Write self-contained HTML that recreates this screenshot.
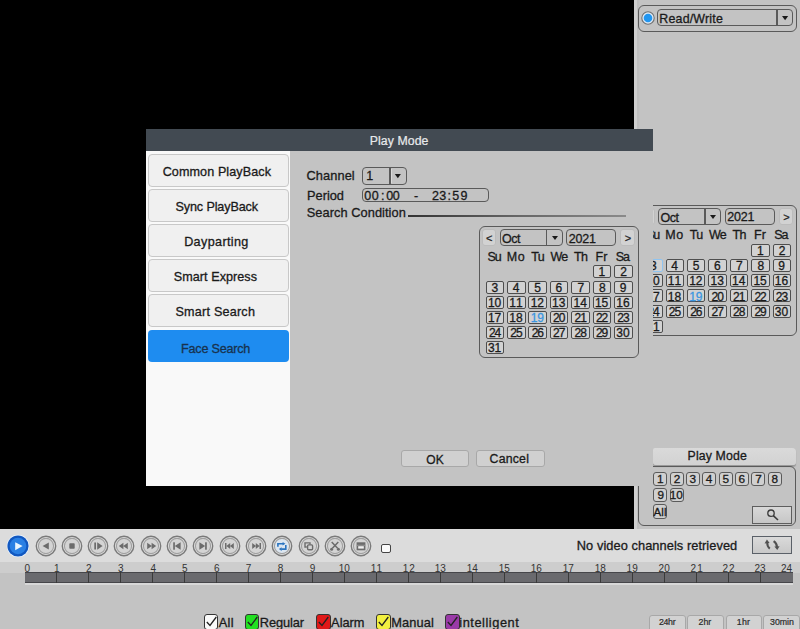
<!DOCTYPE html><html><head><meta charset="utf-8"><style>
*{box-sizing:border-box;margin:0;padding:0}
body{width:800px;height:629px;position:relative;overflow:hidden;background:#c3c3c3;font-family:'Liberation Sans',sans-serif;color:#1a1a1a}
.a{position:absolute}
.t{position:absolute;white-space:pre}
.cal{position:absolute;width:159px;height:131.5px}
.cal div{position:absolute}
.cal .cbd{left:-0.5px;top:-0.5px;width:159.5px;height:131.8px;border:1.5px solid #5a5a5a;border-radius:6px}
.cal .cbtn{top:2.5px;width:14.8px;height:17px;background:#d2d2d2;border:1px solid #bcbcbc;border-radius:3px}
.cal .mon{left:20.3px;top:2.6px;width:63.2px;height:17.2px;border:1.5px solid #5a5a5a;border-radius:4px}
.cal .yr{left:86.6px;top:2.8px;width:50px;height:17px;border:1.5px solid #5a5a5a;border-radius:4px}
.cal .sep{left:66.3px;top:2.6px;width:1.5px;height:17.2px;background:#5a5a5a}
.cal .arr{left:72.3px;top:9.6px;width:0;height:0;border-left:3.2px solid transparent;border-right:3.2px solid transparent;border-top:4.4px solid #1a1a1a}
.cal .cell{width:18.6px;height:13px;border:1.5px solid #4e4e4e;border-radius:2px;background:#d2d2d2}
</style></head><body>
<div class="a" style="left:0;top:0;width:634px;height:529px;background:#000"></div>
<div class="a" style="left:634px;top:0;width:2.5px;height:529px;background:#cfcfcf"></div>
<div class="a" style="left:636.5px;top:0;width:2px;height:529px;background:#bfbfbf"></div>
<div class="a" style="left:638px;top:4.5px;width:158.5px;height:27px;border:1.5px solid #5a5a5a;border-radius:6px"></div>
<svg class="a" style="left:640px;top:9.5px" width="16" height="16"><circle cx="8" cy="8" r="6.2" fill="#dde9f5" stroke="#707070" stroke-width="1.1"/><circle cx="8" cy="8" r="4.3" fill="#2196f0"/></svg>
<div class="a" style="left:657px;top:9.3px;width:136px;height:17.2px;border:1.5px solid #5a5a5a;border-radius:4px"></div>
<div class="a" style="left:776px;top:9.3px;width:1.5px;height:17.2px;background:#5a5a5a"></div>
<svg class="a" style="left:778px;top:12px" width="16" height="12"><path d="M4 4 L10.2 4 L7.1 8.2 Z" fill="#1a1a1a"/></svg>
<div class="cal" style="left:638px;top:205px"><div class="cbd"></div><div class="cbtn" style="left:2px"></div><div class="mon"></div><div class="sep"></div><div class="arr"></div><div class="yr"></div><div class="cbtn" style="left:140.6px"></div><div class="cell" style="left:113.1px;top:38.8px;"></div><div class="cell" style="left:134.5px;top:38.8px;"></div><div class="cell" style="left:6.1px;top:54.0px;border-color:#90c4f0;"></div><div class="cell" style="left:27.5px;top:54.0px;"></div><div class="cell" style="left:48.9px;top:54.0px;"></div><div class="cell" style="left:70.3px;top:54.0px;"></div><div class="cell" style="left:91.7px;top:54.0px;"></div><div class="cell" style="left:113.1px;top:54.0px;"></div><div class="cell" style="left:134.5px;top:54.0px;"></div><div class="cell" style="left:6.1px;top:69.2px;"></div><div class="cell" style="left:27.5px;top:69.2px;"></div><div class="cell" style="left:48.9px;top:69.2px;"></div><div class="cell" style="left:70.3px;top:69.2px;"></div><div class="cell" style="left:91.7px;top:69.2px;"></div><div class="cell" style="left:113.1px;top:69.2px;"></div><div class="cell" style="left:134.5px;top:69.2px;"></div><div class="cell" style="left:6.1px;top:84.4px;"></div><div class="cell" style="left:27.5px;top:84.4px;"></div><div class="cell" style="left:48.9px;top:84.4px;"></div><div class="cell" style="left:70.3px;top:84.4px;"></div><div class="cell" style="left:91.7px;top:84.4px;"></div><div class="cell" style="left:113.1px;top:84.4px;"></div><div class="cell" style="left:134.5px;top:84.4px;"></div><div class="cell" style="left:6.1px;top:99.6px;"></div><div class="cell" style="left:27.5px;top:99.6px;"></div><div class="cell" style="left:48.9px;top:99.6px;"></div><div class="cell" style="left:70.3px;top:99.6px;"></div><div class="cell" style="left:91.7px;top:99.6px;"></div><div class="cell" style="left:113.1px;top:99.6px;"></div><div class="cell" style="left:134.5px;top:99.6px;"></div><div class="cell" style="left:6.1px;top:114.8px;"></div></div>
<div class="a" style="left:653.3px;top:447.6px;width:142.7px;height:17px;background:linear-gradient(#dadada,#d2d2d2);box-shadow:0 1.2px 1px #9a9a9a;border-radius:2px 4px 3px 3px"></div>
<div class="a" style="left:638px;top:466px;width:158.4px;height:59.5px;border:1.5px solid #5a5a5a;border-radius:6px"></div>
<div class="a" style="left:653.4px;top:471.5px;width:14px;height:14px;border:1.5px solid #5a5a5a;border-radius:3px;background:#d0d0d0"></div>
<div class="a" style="left:669.7px;top:471.5px;width:14px;height:14px;border:1.5px solid #5a5a5a;border-radius:3px;background:#d0d0d0"></div>
<div class="a" style="left:686.0px;top:471.5px;width:14px;height:14px;border:1.5px solid #5a5a5a;border-radius:3px;background:#d0d0d0"></div>
<div class="a" style="left:702.3px;top:471.5px;width:14px;height:14px;border:1.5px solid #5a5a5a;border-radius:3px;background:#d0d0d0"></div>
<div class="a" style="left:718.6px;top:471.5px;width:14px;height:14px;border:1.5px solid #5a5a5a;border-radius:3px;background:#d0d0d0"></div>
<div class="a" style="left:734.9px;top:471.5px;width:14px;height:14px;border:1.5px solid #5a5a5a;border-radius:3px;background:#d0d0d0"></div>
<div class="a" style="left:751.2px;top:471.5px;width:14px;height:14px;border:1.5px solid #5a5a5a;border-radius:3px;background:#d0d0d0"></div>
<div class="a" style="left:767.5px;top:471.5px;width:14px;height:14px;border:1.5px solid #5a5a5a;border-radius:3px;background:#d0d0d0"></div>
<div class="a" style="left:653.4px;top:487.8px;width:14px;height:14px;border:1.5px solid #5a5a5a;border-radius:3px;background:#d0d0d0"></div>
<div class="a" style="left:669.7px;top:487.8px;width:14px;height:14px;border:1.5px solid #5a5a5a;border-radius:3px;background:#d0d0d0"></div>
<div class="a" style="left:653.4px;top:503.8px;width:14px;height:15.5px;border:1.5px solid #5a5a5a;border-radius:3px;background:#d0d0d0"></div>
<div class="a" style="left:752.3px;top:506px;width:39.5px;height:17.6px;border:1.3px solid #5e5e5e;background:linear-gradient(#d8d8d8,#c6c6c6)"></div>
<svg class="a" style="left:764px;top:507px" width="18" height="16"><circle cx="7" cy="6.2" r="3.2" fill="none" stroke="#3a3a3a" stroke-width="1.3"/><line x1="9.3" y1="8.6" x2="14" y2="13" stroke="#3a3a3a" stroke-width="1.6"/></svg>
<div class="t" style="left:659.35px;top:12.5px;font-size:12.4px;line-height:12.4px;color:#1a1a1a;letter-spacing:0.189px;-webkit-text-stroke:0.3px #1a1a1a;">Read/Write</div>
<div class="t" style="left:687.55px;top:450.4px;font-size:12.3px;line-height:12.3px;color:#1a1a1a;letter-spacing:0.138px;-webkit-text-stroke:0.3px #1a1a1a;">Play Mode</div>
<div class="t" style="left:656.9px;top:474.0px;font-size:11.8px;line-height:11.8px;color:#1a1a1a;-webkit-text-stroke:0.3px #1a1a1a;">1</div>
<div class="t" style="left:673.7px;top:474.0px;font-size:11.8px;line-height:11.8px;color:#1a1a1a;-webkit-text-stroke:0.3px #1a1a1a;">2</div>
<div class="t" style="left:689.5px;top:474.0px;font-size:11.8px;line-height:11.8px;color:#1a1a1a;-webkit-text-stroke:0.3px #1a1a1a;">3</div>
<div class="t" style="left:705.8px;top:474.0px;font-size:11.8px;line-height:11.8px;color:#1a1a1a;-webkit-text-stroke:0.3px #1a1a1a;">4</div>
<div class="t" style="left:722.6px;top:474.0px;font-size:11.8px;line-height:11.8px;color:#1a1a1a;-webkit-text-stroke:0.3px #1a1a1a;">5</div>
<div class="t" style="left:738.4px;top:474.0px;font-size:11.8px;line-height:11.8px;color:#1a1a1a;-webkit-text-stroke:0.3px #1a1a1a;">6</div>
<div class="t" style="left:755.2px;top:474.0px;font-size:11.8px;line-height:11.8px;color:#1a1a1a;-webkit-text-stroke:0.3px #1a1a1a;">7</div>
<div class="t" style="left:771.5px;top:474.0px;font-size:11.8px;line-height:11.8px;color:#1a1a1a;-webkit-text-stroke:0.3px #1a1a1a;">8</div>
<div class="t" style="left:657.4px;top:490.0px;font-size:11.8px;line-height:11.8px;color:#1a1a1a;-webkit-text-stroke:0.3px #1a1a1a;">9</div>
<div class="t" style="left:669.7px;top:490.0px;font-size:11.8px;line-height:11.8px;color:#1a1a1a;-webkit-text-stroke:0.3px #1a1a1a;">10</div>
<div class="t" style="left:653.6px;top:507.0px;font-size:11.5px;line-height:11.5px;color:#1a1a1a;letter-spacing:0.1px;-webkit-text-stroke:0.3px #1a1a1a;">All</div>
<div class="t" style="left:660.5px;top:211.5px;font-size:12.5px;line-height:12.5px;color:#1a1a1a;letter-spacing:-0.5px;-webkit-text-stroke:0.3px #1a1a1a;">Oct</div>
<div class="t" style="left:727.25px;top:211.3px;font-size:12.5px;line-height:12.5px;color:#1a1a1a;letter-spacing:-0.167px;-webkit-text-stroke:0.3px #1a1a1a;">2021</div>
<div class="t" style="left:644.5px;top:211.9px;font-size:11px;line-height:11px;color:#222;-webkit-text-stroke:0.25px #222;">&lt;</div>
<div class="t" style="left:783.3px;top:211.9px;font-size:11px;line-height:11px;color:#222;-webkit-text-stroke:0.25px #222;">&gt;</div>
<div class="t" style="left:645.9px;top:229.3px;font-size:12.5px;line-height:12.5px;color:#1a1a1a;letter-spacing:-1.0px;-webkit-text-stroke:0.3px #1a1a1a;">Su</div>
<div class="t" style="left:665.3px;top:229.3px;font-size:12.5px;line-height:12.5px;color:#1a1a1a;letter-spacing:0.5px;-webkit-text-stroke:0.3px #1a1a1a;">Mo</div>
<div class="t" style="left:689.7px;top:229.3px;font-size:12.5px;line-height:12.5px;color:#1a1a1a;letter-spacing:-0.5px;-webkit-text-stroke:0.3px #1a1a1a;">Tu</div>
<div class="t" style="left:709.1px;top:229.3px;font-size:12.5px;line-height:12.5px;color:#1a1a1a;letter-spacing:-1.0px;-webkit-text-stroke:0.3px #1a1a1a;">We</div>
<div class="t" style="left:732.5px;top:229.3px;font-size:12.5px;line-height:12.5px;color:#1a1a1a;letter-spacing:-0.6px;-webkit-text-stroke:0.3px #1a1a1a;">Th</div>
<div class="t" style="left:753.9px;top:229.3px;font-size:12.5px;line-height:12.5px;color:#1a1a1a;letter-spacing:0.3px;-webkit-text-stroke:0.3px #1a1a1a;">Fr</div>
<div class="t" style="left:774.3px;top:229.3px;font-size:12.5px;line-height:12.5px;color:#1a1a1a;letter-spacing:-1.2px;-webkit-text-stroke:0.3px #1a1a1a;">Sa</div>
<div class="t" style="left:756.9px;top:244.9px;font-size:12px;line-height:12px;color:#1a1a1a;-webkit-text-stroke:0.3px #1a1a1a;">1</div>
<div class="t" style="left:778.8px;top:244.9px;font-size:12px;line-height:12px;color:#1a1a1a;-webkit-text-stroke:0.3px #1a1a1a;">2</div>
<div class="t" style="left:649.9px;top:260.1px;font-size:12px;line-height:12px;color:#1a1a1a;-webkit-text-stroke:0.3px #1a1a1a;">3</div>
<div class="t" style="left:671.3px;top:260.1px;font-size:12px;line-height:12px;color:#1a1a1a;-webkit-text-stroke:0.3px #1a1a1a;">4</div>
<div class="t" style="left:692.7px;top:260.1px;font-size:12px;line-height:12px;color:#1a1a1a;-webkit-text-stroke:0.3px #1a1a1a;">5</div>
<div class="t" style="left:714.1px;top:260.1px;font-size:12px;line-height:12px;color:#1a1a1a;-webkit-text-stroke:0.3px #1a1a1a;">6</div>
<div class="t" style="left:736.0px;top:260.1px;font-size:12px;line-height:12px;color:#1a1a1a;-webkit-text-stroke:0.3px #1a1a1a;">7</div>
<div class="t" style="left:757.4px;top:260.1px;font-size:12px;line-height:12px;color:#1a1a1a;-webkit-text-stroke:0.3px #1a1a1a;">8</div>
<div class="t" style="left:778.3px;top:260.1px;font-size:12px;line-height:12px;color:#1a1a1a;-webkit-text-stroke:0.3px #1a1a1a;">9</div>
<div class="t" style="left:646.4px;top:275.3px;font-size:12px;line-height:12px;color:#1a1a1a;-webkit-text-stroke:0.3px #1a1a1a;">10</div>
<div class="t" style="left:667.8px;top:275.3px;font-size:12px;line-height:12px;color:#1a1a1a;letter-spacing:1.0px;-webkit-text-stroke:0.3px #1a1a1a;">11</div>
<div class="t" style="left:689.2px;top:275.3px;font-size:12px;line-height:12px;color:#1a1a1a;-webkit-text-stroke:0.3px #1a1a1a;">12</div>
<div class="t" style="left:710.6px;top:275.3px;font-size:12px;line-height:12px;color:#1a1a1a;-webkit-text-stroke:0.3px #1a1a1a;">13</div>
<div class="t" style="left:732.0px;top:275.3px;font-size:12px;line-height:12px;color:#1a1a1a;-webkit-text-stroke:0.3px #1a1a1a;">14</div>
<div class="t" style="left:753.4px;top:275.3px;font-size:12px;line-height:12px;color:#1a1a1a;-webkit-text-stroke:0.3px #1a1a1a;">15</div>
<div class="t" style="left:774.8px;top:275.3px;font-size:12px;line-height:12px;color:#1a1a1a;-webkit-text-stroke:0.3px #1a1a1a;">16</div>
<div class="t" style="left:646.4px;top:290.5px;font-size:12px;line-height:12px;color:#1a1a1a;-webkit-text-stroke:0.3px #1a1a1a;">17</div>
<div class="t" style="left:667.8px;top:290.5px;font-size:12px;line-height:12px;color:#1a1a1a;-webkit-text-stroke:0.3px #1a1a1a;">18</div>
<div class="t" style="left:689.2px;top:290.5px;font-size:12px;line-height:12px;color:#3a96e0;-webkit-text-stroke:0.3px #3a96e0;">19</div>
<div class="t" style="left:711.6px;top:290.5px;font-size:12px;line-height:12px;color:#1a1a1a;letter-spacing:-1.0px;-webkit-text-stroke:0.3px #1a1a1a;">20</div>
<div class="t" style="left:733.0px;top:290.5px;font-size:12px;line-height:12px;color:#1a1a1a;letter-spacing:-1.0px;-webkit-text-stroke:0.3px #1a1a1a;">21</div>
<div class="t" style="left:754.4px;top:290.5px;font-size:12px;line-height:12px;color:#1a1a1a;letter-spacing:-1.0px;-webkit-text-stroke:0.3px #1a1a1a;">22</div>
<div class="t" style="left:775.8px;top:290.5px;font-size:12px;line-height:12px;color:#1a1a1a;letter-spacing:-1.0px;-webkit-text-stroke:0.3px #1a1a1a;">23</div>
<div class="t" style="left:647.4px;top:305.7px;font-size:12px;line-height:12px;color:#1a1a1a;letter-spacing:-1.0px;-webkit-text-stroke:0.3px #1a1a1a;">24</div>
<div class="t" style="left:668.8px;top:305.7px;font-size:12px;line-height:12px;color:#1a1a1a;letter-spacing:-1.0px;-webkit-text-stroke:0.3px #1a1a1a;">25</div>
<div class="t" style="left:690.2px;top:305.7px;font-size:12px;line-height:12px;color:#1a1a1a;letter-spacing:-1.0px;-webkit-text-stroke:0.3px #1a1a1a;">26</div>
<div class="t" style="left:711.6px;top:305.7px;font-size:12px;line-height:12px;color:#1a1a1a;letter-spacing:-1.0px;-webkit-text-stroke:0.3px #1a1a1a;">27</div>
<div class="t" style="left:733.0px;top:305.7px;font-size:12px;line-height:12px;color:#1a1a1a;letter-spacing:-1.0px;-webkit-text-stroke:0.3px #1a1a1a;">28</div>
<div class="t" style="left:754.4px;top:305.7px;font-size:12px;line-height:12px;color:#1a1a1a;letter-spacing:-1.0px;-webkit-text-stroke:0.3px #1a1a1a;">29</div>
<div class="t" style="left:774.8px;top:305.7px;font-size:12px;line-height:12px;color:#1a1a1a;-webkit-text-stroke:0.3px #1a1a1a;">30</div>
<div class="t" style="left:646.4px;top:320.9px;font-size:12px;line-height:12px;color:#1a1a1a;-webkit-text-stroke:0.3px #1a1a1a;">31</div>
<div class="a" style="left:146px;top:129px;width:507px;height:357px;background:#c3c3c3"></div>
<div class="a" style="left:146px;top:129px;width:507px;height:22px;background:#424a52"></div>
<div class="a" style="left:146px;top:151px;width:144px;height:335px;background:#f9f9f9"></div>
<div class="a" style="left:148px;top:154px;width:141px;height:33px;background:#f0f0f0;border:1.5px solid #c8c8c8;border-radius:4px"></div>
<div class="a" style="left:148px;top:189px;width:141px;height:33px;background:#f0f0f0;border:1.5px solid #c8c8c8;border-radius:4px"></div>
<div class="a" style="left:148px;top:224px;width:141px;height:33px;background:#f0f0f0;border:1.5px solid #c8c8c8;border-radius:4px"></div>
<div class="a" style="left:148px;top:259px;width:141px;height:33px;background:#f0f0f0;border:1.5px solid #c8c8c8;border-radius:4px"></div>
<div class="a" style="left:148px;top:294px;width:141px;height:33px;background:#f0f0f0;border:1.5px solid #c8c8c8;border-radius:4px"></div>
<div class="a" style="left:148px;top:329.8px;width:141px;height:32px;background:#1e8cf0;border-radius:4px"></div>
<div class="a" style="left:361.5px;top:167.2px;width:45.3px;height:17.6px;border:1.5px solid #5a5a5a;border-radius:4px"></div>
<div class="a" style="left:389px;top:167.2px;width:1.5px;height:17.6px;background:#5a5a5a"></div>
<svg class="a" style="left:390px;top:170px" width="16" height="12"><path d="M4.8 4 L10.9 4 L7.85 8.3 Z" fill="#1a1a1a"/></svg>
<div class="a" style="left:390.5px;top:168.7px;width:1px;height:14.2px;background:#dadada"></div>
<div class="a" style="left:361.5px;top:187.7px;width:127.7px;height:14.6px;border:1.5px solid #5a5a5a;border-radius:4px"></div>
<div class="a" style="left:408px;top:215.2px;width:218px;height:1.8px;background:linear-gradient(90deg,#333,#666 50%,#8a8a8a)"></div>
<div class="cal" style="left:479.5px;top:226.5px"><div class="cbd"></div><div class="cbtn" style="left:2px"></div><div class="mon"></div><div class="sep"></div><div class="arr"></div><div class="yr"></div><div class="cbtn" style="left:140.6px"></div><div class="cell" style="left:113.1px;top:38.8px;"></div><div class="cell" style="left:134.5px;top:38.8px;"></div><div class="cell" style="left:6.1px;top:54.0px;"></div><div class="cell" style="left:27.5px;top:54.0px;"></div><div class="cell" style="left:48.9px;top:54.0px;"></div><div class="cell" style="left:70.3px;top:54.0px;"></div><div class="cell" style="left:91.7px;top:54.0px;"></div><div class="cell" style="left:113.1px;top:54.0px;"></div><div class="cell" style="left:134.5px;top:54.0px;"></div><div class="cell" style="left:6.1px;top:69.2px;"></div><div class="cell" style="left:27.5px;top:69.2px;"></div><div class="cell" style="left:48.9px;top:69.2px;"></div><div class="cell" style="left:70.3px;top:69.2px;"></div><div class="cell" style="left:91.7px;top:69.2px;"></div><div class="cell" style="left:113.1px;top:69.2px;"></div><div class="cell" style="left:134.5px;top:69.2px;"></div><div class="cell" style="left:6.1px;top:84.4px;"></div><div class="cell" style="left:27.5px;top:84.4px;"></div><div class="cell" style="left:48.9px;top:84.4px;"></div><div class="cell" style="left:70.3px;top:84.4px;"></div><div class="cell" style="left:91.7px;top:84.4px;"></div><div class="cell" style="left:113.1px;top:84.4px;"></div><div class="cell" style="left:134.5px;top:84.4px;"></div><div class="cell" style="left:6.1px;top:99.6px;"></div><div class="cell" style="left:27.5px;top:99.6px;"></div><div class="cell" style="left:48.9px;top:99.6px;"></div><div class="cell" style="left:70.3px;top:99.6px;"></div><div class="cell" style="left:91.7px;top:99.6px;"></div><div class="cell" style="left:113.1px;top:99.6px;"></div><div class="cell" style="left:134.5px;top:99.6px;"></div><div class="cell" style="left:6.1px;top:114.8px;"></div></div>
<div class="a" style="left:401.4px;top:450.4px;width:68px;height:16.9px;background:#d0d0d0;border:1px solid #a8a8a8;border-radius:3px"></div>
<div class="a" style="left:476.4px;top:450.4px;width:68.2px;height:16.9px;background:#d0d0d0;border:1px solid #a8a8a8;border-radius:3px"></div>
<div class="t" style="left:369.65px;top:135.0px;font-size:12.3px;line-height:12.3px;color:#e8eaec;letter-spacing:0.087px;-webkit-text-stroke:0.2px #e8eaec;">Play Mode</div>
<div class="t" style="left:162.65px;top:165.8px;font-size:12.6px;line-height:12.6px;color:#1a1a1a;letter-spacing:0.093px;-webkit-text-stroke:0.3px #1a1a1a;">Common PlayBack</div>
<div class="t" style="left:175.55px;top:200.8px;font-size:12.6px;line-height:12.6px;color:#1a1a1a;letter-spacing:-0.125px;-webkit-text-stroke:0.3px #1a1a1a;">Sync PlayBack</div>
<div class="t" style="left:184.15px;top:235.8px;font-size:12.6px;line-height:12.6px;color:#1a1a1a;letter-spacing:0.367px;-webkit-text-stroke:0.3px #1a1a1a;">Dayparting</div>
<div class="t" style="left:173.8px;top:270.8px;font-size:12.6px;line-height:12.6px;color:#1a1a1a;letter-spacing:0.05px;-webkit-text-stroke:0.3px #1a1a1a;">Smart Express</div>
<div class="t" style="left:175.5px;top:305.8px;font-size:12.6px;line-height:12.6px;color:#1a1a1a;letter-spacing:0.218px;-webkit-text-stroke:0.3px #1a1a1a;">Smart Search</div>
<div class="t" style="left:181.1px;top:342.5px;font-size:12.6px;line-height:12.6px;color:#18324e;letter-spacing:-0.22px;-webkit-text-stroke:0.3px #18324e;">Face Search</div>
<div class="t" style="left:306.55px;top:170.2px;font-size:12.8px;line-height:12.8px;color:#1a1a1a;letter-spacing:0.083px;-webkit-text-stroke:0.3px #1a1a1a;">Channel</div>
<div class="t" style="left:307.0px;top:190.2px;font-size:12.8px;line-height:12.8px;color:#1a1a1a;-webkit-text-stroke:0.3px #1a1a1a;">Period</div>
<div class="t" style="left:306.75px;top:207.0px;font-size:12.8px;line-height:12.8px;color:#1a1a1a;letter-spacing:0.06px;-webkit-text-stroke:0.3px #1a1a1a;">Search Condition</div>
<div class="t" style="left:366.2px;top:170.2px;font-size:12.5px;line-height:12.5px;color:#1a1a1a;-webkit-text-stroke:0.3px #1a1a1a;">1</div>
<div class="t" style="left:364.3px;top:189.5px;font-size:12.5px;line-height:12.5px;color:#1a1a1a;letter-spacing:0.4px;-webkit-text-stroke:0.3px #1a1a1a;">00</div>
<div class="t" style="left:381.1px;top:189.5px;font-size:12.5px;line-height:12.5px;color:#1a1a1a;-webkit-text-stroke:0.3px #1a1a1a;">:</div>
<div class="t" style="left:386.25px;top:189.5px;font-size:12.5px;line-height:12.5px;color:#1a1a1a;letter-spacing:-0.5px;-webkit-text-stroke:0.3px #1a1a1a;">00</div>
<div class="t" style="left:414.1px;top:189.5px;font-size:12.5px;line-height:12.5px;color:#1a1a1a;-webkit-text-stroke:0.3px #1a1a1a;">-</div>
<div class="t" style="left:432.1px;top:189.5px;font-size:12.5px;line-height:12.5px;color:#1a1a1a;letter-spacing:0.2px;-webkit-text-stroke:0.3px #1a1a1a;">23</div>
<div class="t" style="left:447.6px;top:189.5px;font-size:12.5px;line-height:12.5px;color:#1a1a1a;-webkit-text-stroke:0.3px #1a1a1a;">:</div>
<div class="t" style="left:452.15px;top:189.5px;font-size:12.5px;line-height:12.5px;color:#1a1a1a;letter-spacing:1.3px;-webkit-text-stroke:0.3px #1a1a1a;">59</div>
<div class="t" style="left:426.35px;top:453.9px;font-size:12.0px;line-height:12.0px;color:#1a1a1a;-webkit-text-stroke:0.3px #1a1a1a;">OK</div>
<div class="t" style="left:489.6px;top:453.4px;font-size:12.3px;line-height:12.3px;color:#1a1a1a;letter-spacing:0.2px;-webkit-text-stroke:0.3px #1a1a1a;">Cancel</div>
<div class="t" style="left:502.0px;top:233.0px;font-size:12.5px;line-height:12.5px;color:#1a1a1a;letter-spacing:-0.5px;-webkit-text-stroke:0.3px #1a1a1a;">Oct</div>
<div class="t" style="left:568.75px;top:232.8px;font-size:12.5px;line-height:12.5px;color:#1a1a1a;letter-spacing:-0.167px;-webkit-text-stroke:0.3px #1a1a1a;">2021</div>
<div class="t" style="left:486.0px;top:233.4px;font-size:11px;line-height:11px;color:#222;-webkit-text-stroke:0.25px #222;">&lt;</div>
<div class="t" style="left:624.8px;top:233.4px;font-size:11px;line-height:11px;color:#222;-webkit-text-stroke:0.25px #222;">&gt;</div>
<div class="t" style="left:487.4px;top:250.8px;font-size:12.5px;line-height:12.5px;color:#1a1a1a;letter-spacing:-1.0px;-webkit-text-stroke:0.3px #1a1a1a;">Su</div>
<div class="t" style="left:506.8px;top:250.8px;font-size:12.5px;line-height:12.5px;color:#1a1a1a;letter-spacing:0.5px;-webkit-text-stroke:0.3px #1a1a1a;">Mo</div>
<div class="t" style="left:531.2px;top:250.8px;font-size:12.5px;line-height:12.5px;color:#1a1a1a;letter-spacing:-0.5px;-webkit-text-stroke:0.3px #1a1a1a;">Tu</div>
<div class="t" style="left:550.6px;top:250.8px;font-size:12.5px;line-height:12.5px;color:#1a1a1a;letter-spacing:-1.0px;-webkit-text-stroke:0.3px #1a1a1a;">We</div>
<div class="t" style="left:574.0px;top:250.8px;font-size:12.5px;line-height:12.5px;color:#1a1a1a;letter-spacing:-0.6px;-webkit-text-stroke:0.3px #1a1a1a;">Th</div>
<div class="t" style="left:595.4px;top:250.8px;font-size:12.5px;line-height:12.5px;color:#1a1a1a;letter-spacing:0.3px;-webkit-text-stroke:0.3px #1a1a1a;">Fr</div>
<div class="t" style="left:615.8px;top:250.8px;font-size:12.5px;line-height:12.5px;color:#1a1a1a;letter-spacing:-1.2px;-webkit-text-stroke:0.3px #1a1a1a;">Sa</div>
<div class="t" style="left:598.4px;top:266.4px;font-size:12px;line-height:12px;color:#1a1a1a;-webkit-text-stroke:0.3px #1a1a1a;">1</div>
<div class="t" style="left:620.3px;top:266.4px;font-size:12px;line-height:12px;color:#1a1a1a;-webkit-text-stroke:0.3px #1a1a1a;">2</div>
<div class="t" style="left:491.4px;top:281.6px;font-size:12px;line-height:12px;color:#1a1a1a;-webkit-text-stroke:0.3px #1a1a1a;">3</div>
<div class="t" style="left:512.8px;top:281.6px;font-size:12px;line-height:12px;color:#1a1a1a;-webkit-text-stroke:0.3px #1a1a1a;">4</div>
<div class="t" style="left:534.2px;top:281.6px;font-size:12px;line-height:12px;color:#1a1a1a;-webkit-text-stroke:0.3px #1a1a1a;">5</div>
<div class="t" style="left:555.6px;top:281.6px;font-size:12px;line-height:12px;color:#1a1a1a;-webkit-text-stroke:0.3px #1a1a1a;">6</div>
<div class="t" style="left:577.5px;top:281.6px;font-size:12px;line-height:12px;color:#1a1a1a;-webkit-text-stroke:0.3px #1a1a1a;">7</div>
<div class="t" style="left:598.9px;top:281.6px;font-size:12px;line-height:12px;color:#1a1a1a;-webkit-text-stroke:0.3px #1a1a1a;">8</div>
<div class="t" style="left:619.8px;top:281.6px;font-size:12px;line-height:12px;color:#1a1a1a;-webkit-text-stroke:0.3px #1a1a1a;">9</div>
<div class="t" style="left:487.9px;top:296.8px;font-size:12px;line-height:12px;color:#1a1a1a;-webkit-text-stroke:0.3px #1a1a1a;">10</div>
<div class="t" style="left:509.3px;top:296.8px;font-size:12px;line-height:12px;color:#1a1a1a;letter-spacing:1.0px;-webkit-text-stroke:0.3px #1a1a1a;">11</div>
<div class="t" style="left:530.7px;top:296.8px;font-size:12px;line-height:12px;color:#1a1a1a;-webkit-text-stroke:0.3px #1a1a1a;">12</div>
<div class="t" style="left:552.1px;top:296.8px;font-size:12px;line-height:12px;color:#1a1a1a;-webkit-text-stroke:0.3px #1a1a1a;">13</div>
<div class="t" style="left:573.5px;top:296.8px;font-size:12px;line-height:12px;color:#1a1a1a;-webkit-text-stroke:0.3px #1a1a1a;">14</div>
<div class="t" style="left:594.9px;top:296.8px;font-size:12px;line-height:12px;color:#1a1a1a;-webkit-text-stroke:0.3px #1a1a1a;">15</div>
<div class="t" style="left:616.3px;top:296.8px;font-size:12px;line-height:12px;color:#1a1a1a;-webkit-text-stroke:0.3px #1a1a1a;">16</div>
<div class="t" style="left:487.9px;top:312.0px;font-size:12px;line-height:12px;color:#1a1a1a;-webkit-text-stroke:0.3px #1a1a1a;">17</div>
<div class="t" style="left:509.3px;top:312.0px;font-size:12px;line-height:12px;color:#1a1a1a;-webkit-text-stroke:0.3px #1a1a1a;">18</div>
<div class="t" style="left:530.7px;top:312.0px;font-size:12px;line-height:12px;color:#3a96e0;-webkit-text-stroke:0.3px #3a96e0;">19</div>
<div class="t" style="left:553.1px;top:312.0px;font-size:12px;line-height:12px;color:#1a1a1a;letter-spacing:-1.0px;-webkit-text-stroke:0.3px #1a1a1a;">20</div>
<div class="t" style="left:574.5px;top:312.0px;font-size:12px;line-height:12px;color:#1a1a1a;letter-spacing:-1.0px;-webkit-text-stroke:0.3px #1a1a1a;">21</div>
<div class="t" style="left:595.9px;top:312.0px;font-size:12px;line-height:12px;color:#1a1a1a;letter-spacing:-1.0px;-webkit-text-stroke:0.3px #1a1a1a;">22</div>
<div class="t" style="left:617.3px;top:312.0px;font-size:12px;line-height:12px;color:#1a1a1a;letter-spacing:-1.0px;-webkit-text-stroke:0.3px #1a1a1a;">23</div>
<div class="t" style="left:488.9px;top:327.2px;font-size:12px;line-height:12px;color:#1a1a1a;letter-spacing:-1.0px;-webkit-text-stroke:0.3px #1a1a1a;">24</div>
<div class="t" style="left:510.3px;top:327.2px;font-size:12px;line-height:12px;color:#1a1a1a;letter-spacing:-1.0px;-webkit-text-stroke:0.3px #1a1a1a;">25</div>
<div class="t" style="left:531.7px;top:327.2px;font-size:12px;line-height:12px;color:#1a1a1a;letter-spacing:-1.0px;-webkit-text-stroke:0.3px #1a1a1a;">26</div>
<div class="t" style="left:553.1px;top:327.2px;font-size:12px;line-height:12px;color:#1a1a1a;letter-spacing:-1.0px;-webkit-text-stroke:0.3px #1a1a1a;">27</div>
<div class="t" style="left:574.5px;top:327.2px;font-size:12px;line-height:12px;color:#1a1a1a;letter-spacing:-1.0px;-webkit-text-stroke:0.3px #1a1a1a;">28</div>
<div class="t" style="left:595.9px;top:327.2px;font-size:12px;line-height:12px;color:#1a1a1a;letter-spacing:-1.0px;-webkit-text-stroke:0.3px #1a1a1a;">29</div>
<div class="t" style="left:616.3px;top:327.2px;font-size:12px;line-height:12px;color:#1a1a1a;-webkit-text-stroke:0.3px #1a1a1a;">30</div>
<div class="t" style="left:487.9px;top:342.4px;font-size:12px;line-height:12px;color:#1a1a1a;-webkit-text-stroke:0.3px #1a1a1a;">31</div>
<div class="a" style="left:0;top:529px;width:800px;height:33px;background:#dcdcdc"></div>
<svg class="a" style="left:5.600000000000001px;top:533.6px" width="24" height="24"><circle cx="12" cy="12" r="11.2" fill="#eef6fe"/><circle cx="12" cy="12" r="10.6" fill="#1258c0"/><circle cx="12" cy="12" r="8.3" fill="#2a80e4"/><path d="M9.2 8.3 L16.6 12 L9.2 16.3 Z" fill="#eaf6ff"/></svg>
<svg class="a" style="left:33.5px;top:533.6px" width="24" height="24"><circle cx="12" cy="12" r="9.7" fill="#e2e2e2" stroke="#7a7a7a" stroke-width="1.4"/><circle cx="12" cy="12" r="7.6" fill="#d4d4d4" stroke="#a0a0a0" stroke-width="1.1"/><path d="M8.6 12 L14.8 8.6 L14.8 15.4 Z" fill="#6c6c6c"/></svg>
<svg class="a" style="left:59.599999999999994px;top:533.6px" width="24" height="24"><circle cx="12" cy="12" r="9.7" fill="#e2e2e2" stroke="#7a7a7a" stroke-width="1.4"/><circle cx="12" cy="12" r="7.6" fill="#d4d4d4" stroke="#a0a0a0" stroke-width="1.1"/><rect x="9.3" y="9.3" width="5.4" height="5.4" rx="0.8" fill="#6c6c6c"/></svg>
<svg class="a" style="left:86px;top:533.6px" width="24" height="24"><circle cx="12" cy="12" r="9.7" fill="#e2e2e2" stroke="#7a7a7a" stroke-width="1.4"/><circle cx="12" cy="12" r="7.6" fill="#d4d4d4" stroke="#a0a0a0" stroke-width="1.1"/><rect x="8.3" y="8.5" width="1.7" height="7" fill="#6c6c6c"/><path d="M11.2 8.3 L16.6 12 L11.2 15.7 Z" fill="#6c6c6c"/></svg>
<svg class="a" style="left:112.4px;top:533.6px" width="24" height="24"><circle cx="12" cy="12" r="9.7" fill="#e2e2e2" stroke="#7a7a7a" stroke-width="1.4"/><circle cx="12" cy="12" r="7.6" fill="#d4d4d4" stroke="#a0a0a0" stroke-width="1.1"/><path d="M6.8 12 L11.4 8.8 L11.4 15.2 Z M11.2 12 L15.8 8.8 L15.8 15.2 Z" fill="#6c6c6c"/></svg>
<svg class="a" style="left:138.5px;top:533.6px" width="24" height="24"><circle cx="12" cy="12" r="9.7" fill="#e2e2e2" stroke="#7a7a7a" stroke-width="1.4"/><circle cx="12" cy="12" r="7.6" fill="#d4d4d4" stroke="#a0a0a0" stroke-width="1.1"/><path d="M8.2 8.8 L12.8 12 L8.2 15.2 Z M12.6 8.8 L17.2 12 L12.6 15.2 Z" fill="#6c6c6c"/></svg>
<svg class="a" style="left:165px;top:533.6px" width="24" height="24"><circle cx="12" cy="12" r="9.7" fill="#e2e2e2" stroke="#7a7a7a" stroke-width="1.4"/><circle cx="12" cy="12" r="7.6" fill="#d4d4d4" stroke="#a0a0a0" stroke-width="1.1"/><rect x="8.2" y="8.3" width="1.7" height="7.4" fill="#6c6c6c"/><path d="M9.8 12 L15.6 8.3 L15.6 15.7 Z" fill="#6c6c6c"/></svg>
<svg class="a" style="left:191px;top:533.6px" width="24" height="24"><circle cx="12" cy="12" r="9.7" fill="#e2e2e2" stroke="#7a7a7a" stroke-width="1.4"/><circle cx="12" cy="12" r="7.6" fill="#d4d4d4" stroke="#a0a0a0" stroke-width="1.1"/><rect x="14.1" y="8.3" width="1.7" height="7.4" fill="#6c6c6c"/><path d="M8.4 8.3 L14.2 12 L8.4 15.7 Z" fill="#6c6c6c"/></svg>
<svg class="a" style="left:217.6px;top:533.6px" width="24" height="24"><circle cx="12" cy="12" r="9.7" fill="#e2e2e2" stroke="#7a7a7a" stroke-width="1.4"/><circle cx="12" cy="12" r="7.6" fill="#d4d4d4" stroke="#a0a0a0" stroke-width="1.1"/><rect x="7" y="9" width="1.5" height="6" fill="#6c6c6c"/><path d="M8.4 12 L12.2 9 L12.2 15 Z M12 12 L15.8 9 L15.8 15 Z" fill="#6c6c6c"/></svg>
<svg class="a" style="left:244px;top:533.6px" width="24" height="24"><circle cx="12" cy="12" r="9.7" fill="#e2e2e2" stroke="#7a7a7a" stroke-width="1.4"/><circle cx="12" cy="12" r="7.6" fill="#d4d4d4" stroke="#a0a0a0" stroke-width="1.1"/><rect x="15.5" y="9" width="1.5" height="6" fill="#6c6c6c"/><path d="M8.2 9 L12 12 L8.2 15 Z M11.8 9 L15.6 12 L11.8 15 Z" fill="#6c6c6c"/></svg>
<svg class="a" style="left:270.3px;top:533.6px" width="24" height="24"><circle cx="12" cy="12" r="9.7" fill="#e2e2e2" stroke="#7a7a7a" stroke-width="1.4"/><circle cx="12" cy="12" r="7.6" fill="#dce6f0" stroke="#a0a0a0" stroke-width="1.1"/><!--loop--><path d="M7.9 12.8 V9.7 H13" fill="none" stroke="#2a74c0" stroke-width="1.6"/><path d="M12.6 7.9 L15.4 9.7 L12.6 11.6 Z" fill="#2a74c0"/><path d="M15.8 11 V15.1 H11.2" fill="none" stroke="#2a74c0" stroke-width="1.6"/><path d="M11.6 13.2 L8.9 15.1 L11.6 17 Z" fill="#2a74c0"/></svg>
<svg class="a" style="left:296.5px;top:533.6px" width="24" height="24"><circle cx="12" cy="12" r="9.7" fill="#e2e2e2" stroke="#7a7a7a" stroke-width="1.4"/><circle cx="12" cy="12" r="7.6" fill="#d4d4d4" stroke="#a0a0a0" stroke-width="1.1"/><path d="M13 10.6 V8.9 H8 V13 H9.8" fill="none" stroke="#6c6c6c" stroke-width="1.4"/><rect x="10.6" y="10.9" width="5" height="4.9" rx="1" fill="#d4d4d4" stroke="#6c6c6c" stroke-width="1.4"/></svg>
<svg class="a" style="left:323px;top:533.6px" width="24" height="24"><circle cx="12" cy="12" r="9.7" fill="#e2e2e2" stroke="#7a7a7a" stroke-width="1.4"/><circle cx="12" cy="12" r="7.6" fill="#d4d4d4" stroke="#a0a0a0" stroke-width="1.1"/><path d="M8.7 8 L14.6 14.3 M15.3 8 L9.4 14.3" stroke="#6c6c6c" stroke-width="1.5"/><circle cx="8.6" cy="15.3" r="1.5" fill="#6c6c6c"/><circle cx="15.4" cy="15.3" r="1.5" fill="#6c6c6c"/></svg>
<svg class="a" style="left:349.4px;top:533.6px" width="24" height="24"><circle cx="12" cy="12" r="9.7" fill="#e2e2e2" stroke="#7a7a7a" stroke-width="1.4"/><circle cx="12" cy="12" r="7.6" fill="#d4d4d4" stroke="#a0a0a0" stroke-width="1.1"/><rect x="7.6" y="8.3" width="8.8" height="8" fill="#6c6c6c"/><rect x="9.2" y="12.2" width="5.6" height="2.4" fill="#f0f0f0"/><rect x="7.6" y="10.8" width="8.8" height="0.9" fill="#9a9a9a"/></svg>
<div class="a" style="left:380.5px;top:543.5px;width:10px;height:9.5px;background:#fafafa;border:1.3px solid #444;border-radius:2px"></div>
<div class="a" style="left:752.2px;top:536px;width:39.8px;height:17.8px;border:1.5px solid #5a6068;background:linear-gradient(#dadada,#c8c8c8)"></div>
<svg class="a" style="left:760px;top:536px" width="24" height="18"><path d="M9.8 12.6 Q7.2 10.5 7.2 6.6" fill="none" stroke="#505050" stroke-width="2"/><path d="M4.6 7.4 L6.9 3.6 L9.6 7" fill="#505050"/><path d="M13.6 5.2 Q17 7.4 17 11.2" fill="none" stroke="#505050" stroke-width="2"/><path d="M14.4 10.6 L17.3 14 L19.6 10.2" fill="#505050"/></svg>
<div class="a" style="left:0;top:562px;width:800px;height:10.5px;background:#cdcdcd"></div>
<div class="a" style="left:25px;top:583px;width:767.5px;height:1.5px;background:#d8d8d8"></div>
<div class="a" style="left:25px;top:572.3px;width:767.5px;height:10.7px;background:#6a6a6e;border-top:1.3px solid #46464a;border-bottom:1px solid #46464a"></div>
<div class="a" style="left:56.4px;top:572.3px;width:1.1px;height:10.7px;background:#3a3a3a"></div>
<div class="a" style="left:88.4px;top:572.3px;width:1.1px;height:10.7px;background:#3a3a3a"></div>
<div class="a" style="left:120.3px;top:572.3px;width:1.1px;height:10.7px;background:#3a3a3a"></div>
<div class="a" style="left:152.3px;top:572.3px;width:1.1px;height:10.7px;background:#3a3a3a"></div>
<div class="a" style="left:184.3px;top:572.3px;width:1.1px;height:10.7px;background:#3a3a3a"></div>
<div class="a" style="left:216.3px;top:572.3px;width:1.1px;height:10.7px;background:#3a3a3a"></div>
<div class="a" style="left:248.3px;top:572.3px;width:1.1px;height:10.7px;background:#3a3a3a"></div>
<div class="a" style="left:280.2px;top:572.3px;width:1.1px;height:10.7px;background:#3a3a3a"></div>
<div class="a" style="left:312.2px;top:572.3px;width:1.1px;height:10.7px;background:#3a3a3a"></div>
<div class="a" style="left:344.2px;top:572.3px;width:1.1px;height:10.7px;background:#3a3a3a"></div>
<div class="a" style="left:376.2px;top:572.3px;width:1.1px;height:10.7px;background:#3a3a3a"></div>
<div class="a" style="left:408.2px;top:572.3px;width:1.1px;height:10.7px;background:#3a3a3a"></div>
<div class="a" style="left:440.1px;top:572.3px;width:1.1px;height:10.7px;background:#3a3a3a"></div>
<div class="a" style="left:472.1px;top:572.3px;width:1.1px;height:10.7px;background:#3a3a3a"></div>
<div class="a" style="left:504.1px;top:572.3px;width:1.1px;height:10.7px;background:#3a3a3a"></div>
<div class="a" style="left:536.1px;top:572.3px;width:1.1px;height:10.7px;background:#3a3a3a"></div>
<div class="a" style="left:568.1px;top:572.3px;width:1.1px;height:10.7px;background:#3a3a3a"></div>
<div class="a" style="left:600.0px;top:572.3px;width:1.1px;height:10.7px;background:#3a3a3a"></div>
<div class="a" style="left:632.0px;top:572.3px;width:1.1px;height:10.7px;background:#3a3a3a"></div>
<div class="a" style="left:664.0px;top:572.3px;width:1.1px;height:10.7px;background:#3a3a3a"></div>
<div class="a" style="left:696.0px;top:572.3px;width:1.1px;height:10.7px;background:#3a3a3a"></div>
<div class="a" style="left:728.0px;top:572.3px;width:1.1px;height:10.7px;background:#3a3a3a"></div>
<div class="a" style="left:759.9px;top:572.3px;width:1.1px;height:10.7px;background:#3a3a3a"></div>
<div class="a" style="left:203.5px;top:614px;width:14.8px;height:16px;background:#fafafa;border:1.5px solid #333;border-radius:3px"></div>
<svg class="a" style="left:203.5px;top:614px" width="15" height="15"><path d="M2.8 8 L6 11.5 L12.3 3" fill="none" stroke="#222" stroke-width="1.3"/></svg>
<div class="a" style="left:244.6px;top:614px;width:14.8px;height:16px;background:#22e022;border:1.5px solid #333;border-radius:3px"></div>
<svg class="a" style="left:244.6px;top:614px" width="15" height="15"><path d="M2.8 8 L6 11.5 L12.3 3" fill="none" stroke="#222" stroke-width="1.3"/></svg>
<div class="a" style="left:316.2px;top:614px;width:14.8px;height:16px;background:#e01818;border:1.5px solid #333;border-radius:3px"></div>
<svg class="a" style="left:316.2px;top:614px" width="15" height="15"><path d="M2.8 8 L6 11.5 L12.3 3" fill="none" stroke="#222" stroke-width="1.3"/></svg>
<div class="a" style="left:376.3px;top:614px;width:14.8px;height:16px;background:#f2f040;border:1.5px solid #333;border-radius:3px"></div>
<svg class="a" style="left:376.3px;top:614px" width="15" height="15"><path d="M2.8 8 L6 11.5 L12.3 3" fill="none" stroke="#222" stroke-width="1.3"/></svg>
<div class="a" style="left:445.2px;top:614px;width:14.8px;height:16px;background:#9a3aa8;border:1.5px solid #333;border-radius:3px"></div>
<svg class="a" style="left:445.2px;top:614px" width="15" height="15"><path d="M2.8 8 L6 11.5 L12.3 3" fill="none" stroke="#222" stroke-width="1.3"/></svg>
<div class="a" style="left:648.8px;top:615px;width:36.8px;height:20px;background:#d2d2d2;border:1px solid #a8a8a8;border-radius:3px"></div>
<div class="a" style="left:687px;top:615px;width:36.8px;height:20px;background:#d2d2d2;border:1px solid #a8a8a8;border-radius:3px"></div>
<div class="a" style="left:725.6px;top:615px;width:36.8px;height:20px;background:#d2d2d2;border:1px solid #a8a8a8;border-radius:3px"></div>
<div class="a" style="left:763px;top:615px;width:36.8px;height:20px;background:#d2d2d2;border:1px solid #a8a8a8;border-radius:3px"></div>
<div class="t" style="left:576.8px;top:539.9px;font-size:12.8px;line-height:12.8px;color:#1a1a1a;letter-spacing:0.069px;-webkit-text-stroke:0.3px #1a1a1a;">No video channels retrieved</div>
<div class="t" style="left:218.75px;top:616.8px;font-size:12.8px;line-height:12.8px;color:#1a1a1a;letter-spacing:0.25px;-webkit-text-stroke:0.3px #1a1a1a;">All</div>
<div class="t" style="left:259.75px;top:616.8px;font-size:12.8px;line-height:12.8px;color:#1a1a1a;letter-spacing:-0.083px;-webkit-text-stroke:0.3px #1a1a1a;">Regular</div>
<div class="t" style="left:331.1px;top:616.8px;font-size:12.8px;line-height:12.8px;color:#1a1a1a;-webkit-text-stroke:0.3px #1a1a1a;">Alarm</div>
<div class="t" style="left:391.35px;top:616.8px;font-size:12.8px;line-height:12.8px;color:#1a1a1a;letter-spacing:0.1px;-webkit-text-stroke:0.3px #1a1a1a;">Manual</div>
<div class="t" style="left:459.25px;top:616.8px;font-size:12.8px;line-height:12.8px;color:#1a1a1a;letter-spacing:0.55px;-webkit-text-stroke:0.3px #1a1a1a;">intelligent</div>
<div class="t" style="left:659.0px;top:617.5px;font-size:8.8px;line-height:8.8px;color:#2a2a2a;letter-spacing:-0.333px;-webkit-text-stroke:0.2px #2a2a2a;">24hr</div>
<div class="t" style="left:698.5px;top:617.5px;font-size:8.8px;line-height:8.8px;color:#2a2a2a;-webkit-text-stroke:0.2px #2a2a2a;">2hr</div>
<div class="t" style="left:736.75px;top:617.5px;font-size:8.8px;line-height:8.8px;color:#2a2a2a;letter-spacing:0.25px;-webkit-text-stroke:0.2px #2a2a2a;">1hr</div>
<div class="t" style="left:770.0px;top:617.5px;font-size:8.8px;line-height:8.8px;color:#2a2a2a;-webkit-text-stroke:0.2px #2a2a2a;">30min</div>
<div class="t" style="left:24.5px;top:563.7px;font-size:10px;line-height:10px;color:#333333;">0</div>
<div class="t" style="left:53.98px;top:563.7px;font-size:10px;line-height:10px;color:#333333;">1</div>
<div class="t" style="left:85.96px;top:563.7px;font-size:10px;line-height:10px;color:#333333;">2</div>
<div class="t" style="left:117.94px;top:563.7px;font-size:10px;line-height:10px;color:#333333;">3</div>
<div class="t" style="left:150.42px;top:563.7px;font-size:10px;line-height:10px;color:#333333;">4</div>
<div class="t" style="left:181.9px;top:563.7px;font-size:10px;line-height:10px;color:#333333;">5</div>
<div class="t" style="left:213.88px;top:563.7px;font-size:10px;line-height:10px;color:#333333;">6</div>
<div class="t" style="left:245.86px;top:563.7px;font-size:10px;line-height:10px;color:#333333;">7</div>
<div class="t" style="left:277.84px;top:563.7px;font-size:10px;line-height:10px;color:#333333;">8</div>
<div class="t" style="left:309.82px;top:563.7px;font-size:10px;line-height:10px;color:#333333;">9</div>
<div class="t" style="left:338.8px;top:563.7px;font-size:10px;line-height:10px;color:#333333;">10</div>
<div class="t" style="left:370.78px;top:563.7px;font-size:10px;line-height:10px;color:#333333;letter-spacing:1.0px;">11</div>
<div class="t" style="left:402.76px;top:563.7px;font-size:10px;line-height:10px;color:#333333;letter-spacing:1.0px;">12</div>
<div class="t" style="left:434.74px;top:563.7px;font-size:10px;line-height:10px;color:#333333;">13</div>
<div class="t" style="left:466.72px;top:563.7px;font-size:10px;line-height:10px;color:#333333;">14</div>
<div class="t" style="left:498.7px;top:563.7px;font-size:10px;line-height:10px;color:#333333;">15</div>
<div class="t" style="left:530.68px;top:563.7px;font-size:10px;line-height:10px;color:#333333;">16</div>
<div class="t" style="left:562.66px;top:563.7px;font-size:10px;line-height:10px;color:#333333;">17</div>
<div class="t" style="left:594.64px;top:563.7px;font-size:10px;line-height:10px;color:#333333;">18</div>
<div class="t" style="left:626.62px;top:563.7px;font-size:10px;line-height:10px;color:#333333;">19</div>
<div class="t" style="left:658.6px;top:563.7px;font-size:10px;line-height:10px;color:#333333;">20</div>
<div class="t" style="left:690.58px;top:563.7px;font-size:10px;line-height:10px;color:#333333;letter-spacing:1.0px;">21</div>
<div class="t" style="left:722.56px;top:563.7px;font-size:10px;line-height:10px;color:#333333;letter-spacing:1.0px;">22</div>
<div class="t" style="left:754.54px;top:563.7px;font-size:10px;line-height:10px;color:#333333;">23</div>
<div class="t" style="left:781.02px;top:563.7px;font-size:10px;line-height:10px;color:#333333;">24</div>
</body></html>
